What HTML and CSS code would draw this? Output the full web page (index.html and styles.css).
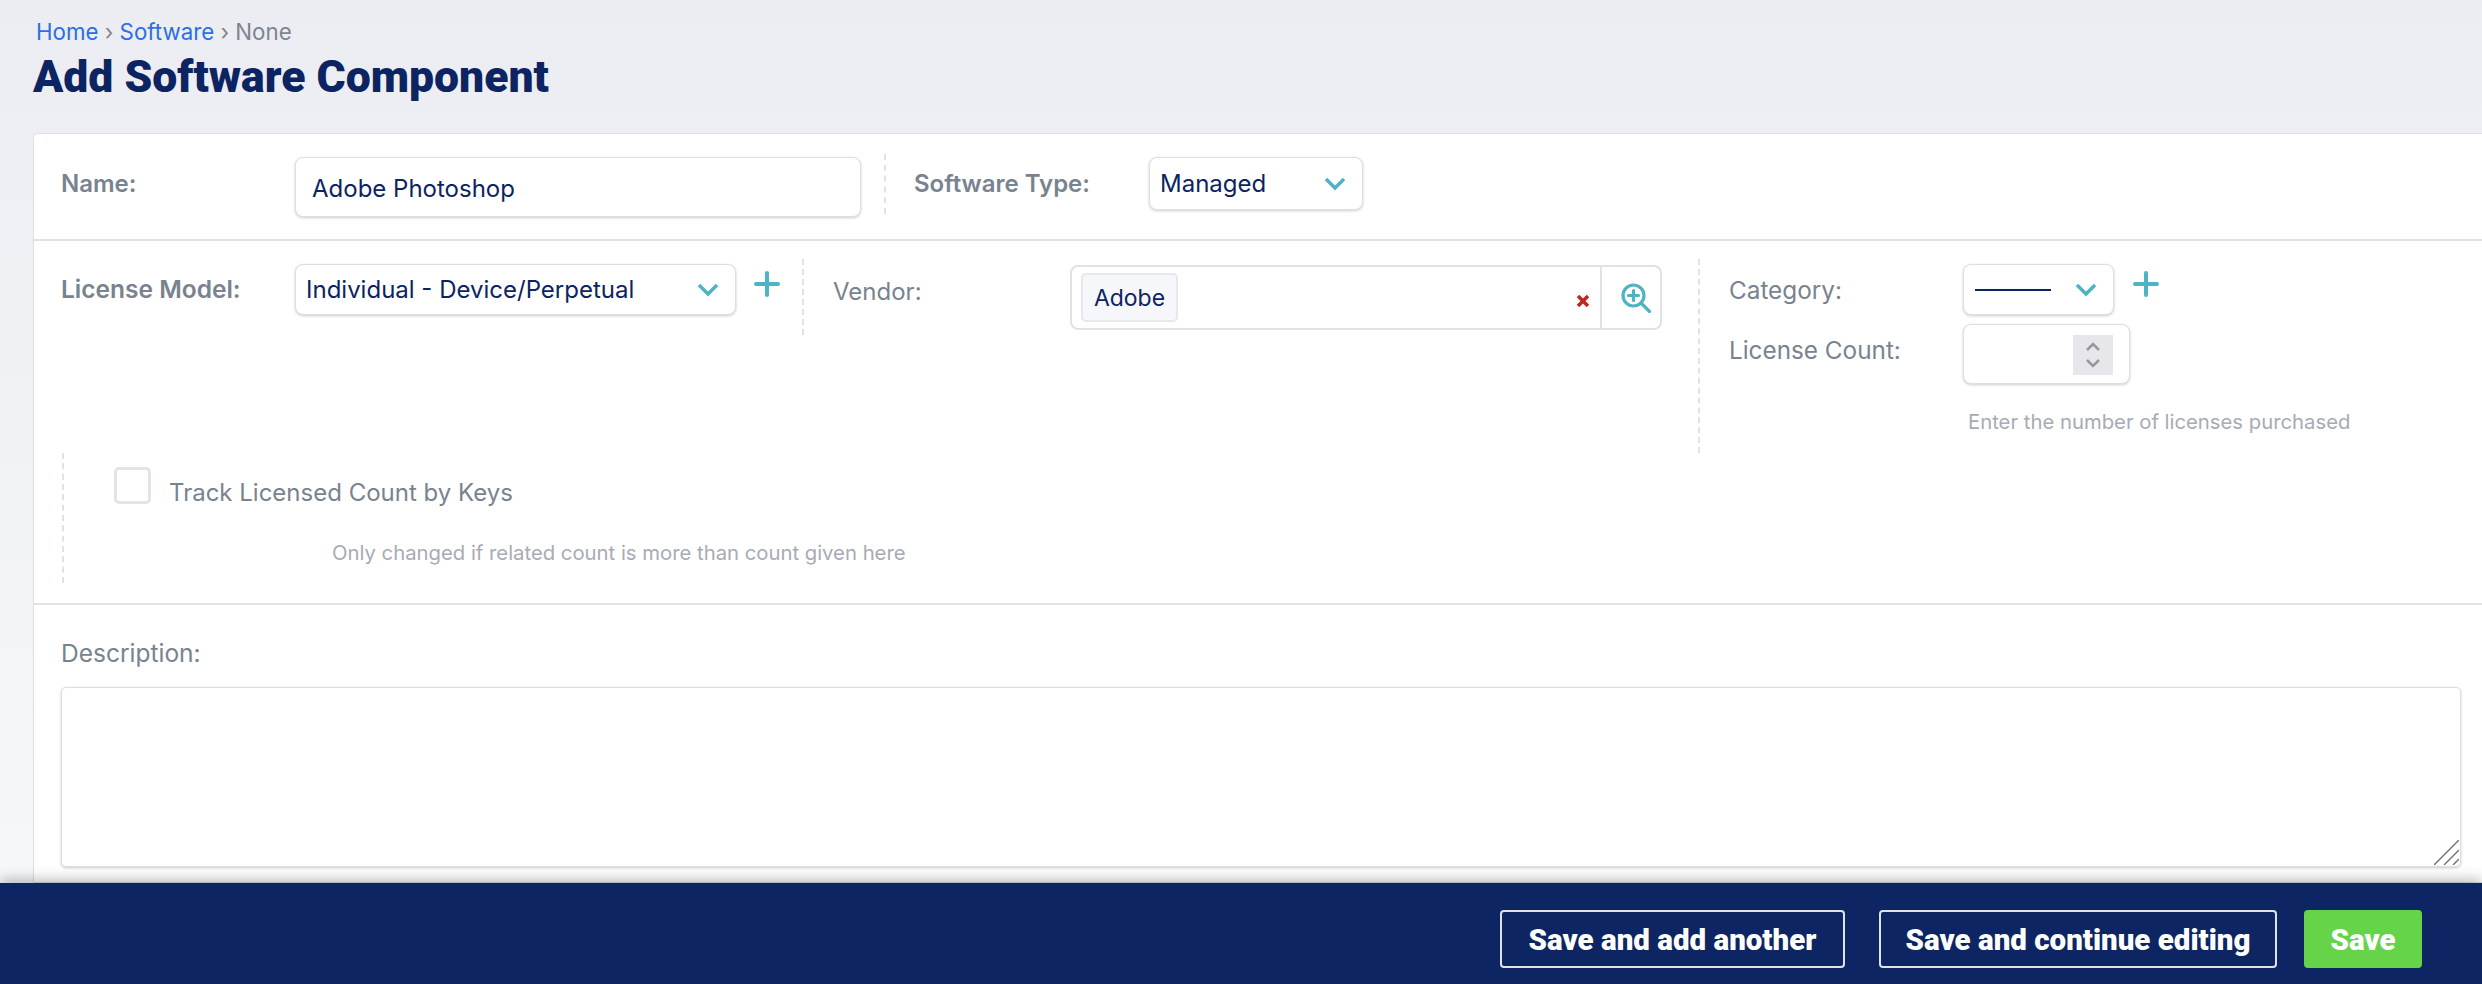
FILE: index.html
```html
<!DOCTYPE html>
<html lang="en">
<head>
    <meta charset="UTF-8">
    <meta name="viewport" content="width=device-width, initial-scale=1.0">
    <title>Add Software Component</title>
    <link rel="stylesheet" href="styles.css">
</head>
<body>
    <header class="page-head">
        <div class="breadcrumb"><a href="#">Home</a> › <a href="#">Software</a> › None</div>
        <h1>Add Software Component</h1>
    </header>
    <form class="card">
        <div class="row row-name">
            <div class="field">
                <label class="label label-bold" for="name">Name:</label>
                <input class="input input-name" type="text" id="name" value="Adobe Photoshop">
            </div>
            <div class="field field-type">
                <label class="label label-bold label-type">Software Type:</label>
                <div class="select select-type">
                    <span>Managed</span>
                    <svg class="chevron" viewBox="0 0 22 14"><path d="M2 2l9 9 9-9"/></svg>
                </div>
            </div>
        </div>
        <div class="row row-details">
            <div class="col col-license">
                <label class="label label-bold">License Model:</label>
                <div class="select select-license">
                    <span>Individual - Device/Perpetual</span>
                    <svg class="chevron" viewBox="0 0 22 14"><path d="M2 2l9 9 9-9"/></svg>
                </div>
                <svg class="plus" viewBox="0 0 26 26"><path d="M13 2v22M2 13h22"/></svg>
            </div>
            <div class="col col-vendor">
                <label class="label label-vendor">Vendor:</label>
                <div class="lookup">
                    <div class="lookup-main">
                        <span class="chip">Adobe</span>
                        <svg class="clear" viewBox="0 0 14 14"><path d="M2 2l10 10M12 2L2 12"/></svg>
                    </div>
                    <div class="lookup-btn">
                        <svg class="zoom-icon" viewBox="0 0 30 30"><circle cx="12.5" cy="12.5" r="10.5"/><path d="M12.5 7.5v10M7.5 12.5h10M20.5 20.5l8 8"/></svg>
                    </div>
                </div>
            </div>
            <div class="col col-category">
                <div class="line">
                    <label class="label label-plain">Category:</label>
                    <div class="select select-category">
                        <span class="blank"></span>
                        <svg class="chevron" viewBox="0 0 22 14"><path d="M2 2l9 9 9-9"/></svg>
                    </div>
                    <svg class="plus" viewBox="0 0 26 26"><path d="M13 2v22M2 13h22"/></svg>
                </div>
                <div class="line line-count">
                    <label class="label label-plain">License Count:</label>
                    <div class="count">
                        <div class="spin">
                            <svg viewBox="0 0 16 10"><path d="M2 8l6-6 6 6"/></svg>
                            <svg viewBox="0 0 16 10"><path d="M2 2l6 6 6-6"/></svg>
                        </div>
                    </div>
                </div>
                <p class="help help-count">Enter the number of licenses purchased</p>
            </div>
            <div class="col col-track">
                <div class="check-line">
                    <span class="checkbox"></span>
                    <span class="label-track">Track Licensed Count by Keys</span>
                </div>
                <p class="help help-track">Only changed if related count is more than count given here</p>
            </div>
        </div>
        <div class="row row-desc">
            <label class="label-desc" for="description">Description:</label>
            <div class="textarea-wrap">
                <textarea class="textarea" id="description"></textarea>
                <svg class="grip" viewBox="0 0 25 25"><path d="M0 25L25 0M10 25L25 10M19 25l6-6"/></svg>
            </div>
        </div>
    </form>
    <footer class="footer">
        <button class="btn" type="button">Save and add another</button>
        <button class="btn btn-continue" type="button">Save and continue editing</button>
        <button class="btn btn-save" type="submit">Save</button>
    </footer>
</body>
</html>
```

FILE: styles.css
```css
* {
    box-sizing: border-box;
}
html, body {
    height: 100%;
}
body {
    margin: 0;
    height: 984px;
    overflow: hidden;
    display: flex;
    flex-direction: column;
    font-family: Inter, "Liberation Sans", sans-serif;
    color: #0c2461;
    background: linear-gradient(#ecedf2, #f7f8fa);
}
.page-head {
    height: 133px;
    padding: 20px 0 0 33px;
}
.breadcrumb {
    padding-left: 3px;
    font-size: 22.3px;
    line-height: 24px;
    color: #7b8591;
}
.breadcrumb a {
    color: #2b6fe3;
    text-decoration: none;
}
h1 {
    margin: 8px 0 0;
    font-family: Roboto, sans-serif;
    font-size: 44.5px;
    line-height: 50px;
    font-weight: 900;
    color: #0c2461;
}
.card {
    width: 2520px;
    height: 750px;
    margin-left: 33px;
    flex: none;
    background: #fff;
    border: 1px solid #dcdfe4;
    border-radius: 5px 0 0 0;
}
.row {
    border-bottom: 2px solid #dfe3e8;
}
.row-name {
    height: 107px;
    display: flex;
    padding: 20px 0 0 27px;
}
.field {
    display: flex;
    align-items: flex-start;
}
.label {
    font-size: 24px;
    color: #78838f;
}
.label-bold {
    font-weight: 600;
}
.row-name .label {
    width: 234px;
    padding-top: 15px;
    line-height: 30px;
}
.input {
    font: inherit;
    color: inherit;
}
.input-name {
    width: 566px;
    height: 60px;
    margin-top: 3px;
    padding: 2px 16px 0;
    font-size: 24px;
    background: #fff;
    border: 1px solid #dcdfe4;
    border-radius: 8px;
    box-shadow: 0 1px 3px rgba(0, 0, 0, 0.2);
    outline: none;
}
.field-type {
    margin-left: 23px;
    padding-left: 28px;
    height: 60px;
    border-left: 2px dashed #dfe3e8;
}
.row-name .label-type {
    width: 235px;
}
.select {
    display: flex;
    align-items: center;
    justify-content: space-between;
    background: #fff;
    border: 1px solid #dcdfe4;
    border-radius: 8px;
    box-shadow: 0 1px 3px rgba(0, 0, 0, 0.2);
    font-size: 24px;
}
.select-type {
    width: 214px;
    height: 53px;
    margin-top: 3px;
    padding: 0 16px 0 10px;
}
.chevron {
    width: 22px;
    height: 14px;
    fill: none;
    stroke: #4fb3c6;
    stroke-width: 3.5;
}
.plus {
    width: 26px;
    height: 26px;
    fill: none;
    stroke: #4fb3c6;
    stroke-width: 4;
    stroke-linecap: round;
}
.row-details {
    height: 364px;
    display: flex;
    flex-wrap: wrap;
    align-items: flex-start;
    align-content: flex-start;
    padding: 18px 0 0 27px;
}
.col-license {
    width: 741px;
    height: 76px;
    display: flex;
    align-items: flex-start;
}
.col-license .label {
    width: 234px;
    padding-top: 15px;
    line-height: 30px;
    font-size: 24.5px;
}
.select-license {
    width: 441px;
    height: 51px;
    margin-top: 5px;
    padding: 0 16px 0 10px;
}
.col-license .plus {
    margin: 12px 0 0 18px;
}
.col-vendor {
    width: 896px;
    height: 76px;
    display: flex;
    align-items: flex-start;
    padding-left: 29px;
    border-left: 2px dashed #dfe3e8;
}
.label-vendor {
    width: 237px;
    padding-top: 18px;
    line-height: 30px;
    font-weight: 400;
}
.lookup {
    width: 592px;
    height: 65px;
    margin-top: 6px;
    display: flex;
    border: 2px solid #dfe3e8;
    border-radius: 8px;
}
.lookup-main {
    flex: 1;
    display: flex;
    align-items: center;
    justify-content: space-between;
    padding: 0 10px 0 9px;
    border-right: 2px solid #dfe3e8;
}
.chip {
    width: 97px;
    height: 49px;
    display: flex;
    align-items: center;
    justify-content: center;
    font-size: 23px;
    background: #f6f7fa;
    border: 2px solid #e6e8ec;
    border-radius: 5px;
}
.clear {
    width: 14px;
    height: 14px;
    margin-top: 6px;
    fill: none;
    stroke: #c0271d;
    stroke-width: 3.5;
}
.lookup-btn {
    width: 58px;
    display: flex;
    align-items: center;
    justify-content: center;
}
.zoom-icon {
    width: 30px;
    height: 30px;
    margin-left: 9px;
    fill: none;
    stroke: #4fb3c6;
    stroke-width: 3.2;
    stroke-linecap: round;
}
.col-category {
    width: 780px;
    height: 194px;
    padding-left: 29px;
    border-left: 2px dashed #dfe3e8;
}
.line {
    display: flex;
    align-items: flex-start;
}
.label-plain {
    width: 234px;
    padding-top: 16px;
    line-height: 30px;
    font-weight: 400;
    font-size: 24.3px;
}
.select-category {
    width: 151px;
    height: 51px;
    margin-top: 5px;
    padding: 0 16px 0 11px;
}
.blank {
    width: 76px;
    height: 2px;
    background: #0c2461;
}
.col-category .plus {
    margin: 12px 0 0 19px;
}
.line-count {
    margin-top: 9px;
}
.line-count .label {
    padding-top: 11px;
}
.count {
    width: 167px;
    height: 60px;
    display: flex;
    justify-content: flex-end;
    padding: 10px 16px 0 0;
    background: #fff;
    border: 1px solid #dcdfe4;
    border-radius: 8px;
    box-shadow: 0 1px 3px rgba(0, 0, 0, 0.2);
}
.spin {
    width: 40px;
    height: 40px;
    display: flex;
    flex-direction: column;
    align-items: center;
    justify-content: center;
    gap: 6px;
    background: #e7e7eb;
}
.spin svg {
    width: 16px;
    height: 10px;
    fill: none;
    stroke: #96969f;
    stroke-width: 2.5;
}
.help {
    margin: 0;
    font-size: 20.3px;
    line-height: 24px;
    color: #a7abb5;
}
.help-count {
    margin: 26px 0 0 239px;
}
.col-track {
    width: 1000px;
    height: 130px;
    margin-left: 1px;
    padding: 13px 0 0 50px;
    border-left: 2px dashed #dfe3e8;
}
.check-line {
    display: flex;
    align-items: flex-start;
}
.checkbox {
    width: 37px;
    height: 37px;
    margin-top: 1px;
    background: #fff;
    border: 3px solid #e1e4e8;
    border-radius: 5px;
}
.label-track {
    margin-left: 18px;
    font-size: 24px;
    line-height: 30px;
    padding-top: 12px;
    color: #78838f;
}
.help-track {
    margin: 33px 0 0 218px;
}
.row-desc {
    padding: 33px 0 0 27px;
    border-bottom: none;
}
.label-desc {
    display: block;
    font-size: 24.5px;
    line-height: 30px;
    color: #78838f;
}
.textarea-wrap {
    position: relative;
    width: 2400px;
    height: 180px;
    margin-top: 19px;
}
.textarea {
    display: block;
    width: 100%;
    height: 100%;
    resize: none;
    background: #fff;
    border: 1px solid #dcdfe4;
    border-radius: 5px;
    box-shadow: 0 1px 3px rgba(0, 0, 0, 0.2);
    outline: none;
}
.grip {
    position: absolute;
    right: 2px;
    bottom: 2px;
    width: 25px;
    height: 25px;
    fill: none;
    stroke: #777;
    stroke-width: 1.5;
}
.footer {
    flex: 1;
    display: flex;
    justify-content: flex-end;
    align-items: flex-start;
    gap: 34px;
    padding: 27px 60px 0 0;
    background: #0d2563;
    box-shadow: 0 -4px 12px rgba(0, 0, 0, 0.25);
    position: relative;
}
.btn {
    width: 345px;
    height: 58px;
    padding-top: 2px;
    font-family: Roboto, sans-serif;
    font-size: 29.5px;
    font-weight: 900;
    color: #fff;
    background: transparent;
    border: 2px solid #dfe3e8;
    border-radius: 4px;
}
.btn-continue {
    width: 398px;
}
.btn-save {
    width: 118px;
    margin-left: -7px;
    background: #65d448;
    border: none;
}
```
